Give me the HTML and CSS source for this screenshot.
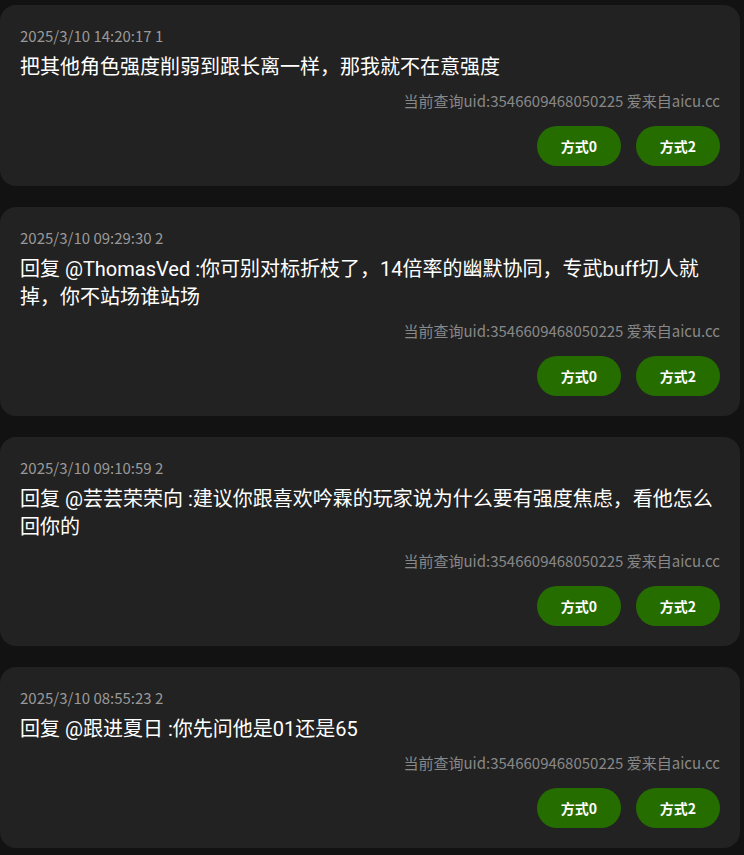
FILE: index.html
```html
<!DOCTYPE html>
<html lang="zh-CN">
<head>
    <meta charset="UTF-8">
    <meta name="viewport" content="width=device-width, initial-scale=1.0">
    <title>评论记录</title>
    <link rel="stylesheet" href="styles.css">
</head>
<body>

    <div class="list">
        <div class="card">
            <div class="time">2025/3/10 14:20:17 1</div>
            <div class="content">把其他角色强度削弱到跟长离一样，那我就不在意强度</div>
            <div class="source">当前查询uid:3546609468050225 爱来自aicu.cc</div>
            <div class="actions">
                <button class="btn">方式0</button>
                <button class="btn">方式2</button>
            </div>
        </div>

        <div class="card">
            <div class="time">2025/3/10 09:29:30 2</div>
            <div class="content">回复 @ThomasVed :你可别对标折枝了，14倍率的幽默协同，专武buff切人就掉，你不站场谁站场</div>
            <div class="source">当前查询uid:3546609468050225 爱来自aicu.cc</div>
            <div class="actions">
                <button class="btn">方式0</button>
                <button class="btn">方式2</button>
            </div>
        </div>

        <div class="card">
            <div class="time">2025/3/10 09:10:59 2</div>
            <div class="content">回复 @芸芸荣荣向 :建议你跟喜欢吟霖的玩家说为什么要有强度焦虑，看他怎么回你的</div>
            <div class="source">当前查询uid:3546609468050225 爱来自aicu.cc</div>
            <div class="actions">
                <button class="btn">方式0</button>
                <button class="btn">方式2</button>
            </div>
        </div>

        <div class="card">
            <div class="time">2025/3/10 08:55:23 2</div>
            <div class="content">回复 @跟进夏日 :你先问他是01还是65</div>
            <div class="source">当前查询uid:3546609468050225 爱来自aicu.cc</div>
            <div class="actions">
                <button class="btn">方式0</button>
                <button class="btn">方式2</button>
            </div>
        </div>
    </div>

</body>
</html>
```

FILE: styles.css
```css
body {
    margin: 0;
    background-color: #121212;
    font-family: "Noto Sans CJK SC", "Noto Sans", sans-serif;
    color: #fff;
}
.list {
    display: flex;
    flex-direction: column;
    gap: 21px;
    padding: 5px 4px 9px 0;
}
.card {
    background: #222;
    border-radius: 16px;
    padding: 20px;
}
.time {
    font-size: 15px;
    line-height: 22px;
    color: #999;
}
.content {
    font-family: Roboto, "Noto Sans CJK SC", sans-serif;
    font-size: 20px;
    line-height: 28px;
    margin-top: 6px;
    color: #fff;
}
.source {
    font-size: 15px;
    line-height: 20px;
    color: #888;
    text-align: right;
    margin-top: 10px;
}
.actions {
    display: flex;
    justify-content: flex-end;
    gap: 15px;
    margin-top: 15px;
}
.btn {
    width: 84px;
    height: 40px;
    border: none;
    border-radius: 20px;
    background-color: #266d00;
    color: #fff;
    font-family: "Noto Sans CJK SC", "Noto Sans", sans-serif;
    font-weight: bold;
    font-size: 14px;
    cursor: pointer;
}
.btn:hover {
    background-color: #2d8000;
}
```
